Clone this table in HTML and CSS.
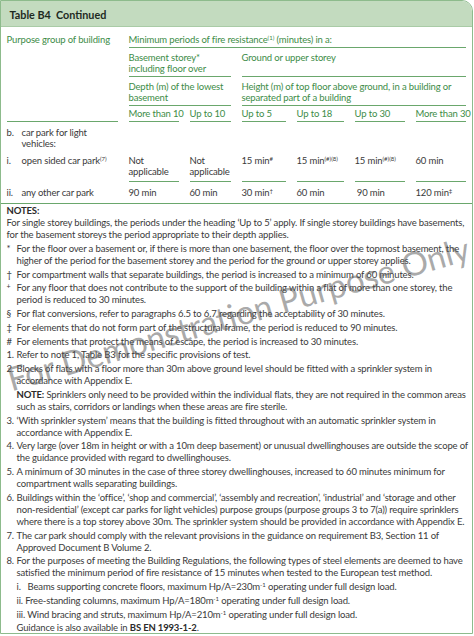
FILE: index.html
```html
<!DOCTYPE html>
<html>
<head>
<meta charset="utf-8">
<link rel="stylesheet" href="styles.css">
</head>
<body>
<div class="panel">
  <div class="title">Table B4&nbsp; Continued</div>
  <div class="tbl">
    <div class="c h purpose">Purpose group of building</div>
    <div class="c h span-all rA">Minimum periods of fire resistance<sup>(1)</sup> (minutes) in a:</div>
    <div class="c h span-base rB">Basement storey*<br>including floor over</div>
    <div class="c h span-ground rB">Ground or upper storey</div>
    <div class="c h span-base rC">Depth (m) of the lowest<br>basement</div>
    <div class="c h span-ground rC">Height (m) of top floor above ground, in a building or<br>separated part of a building</div>
    <div class="c h rD">More than 10</div>
    <div class="c h rD">Up to 10</div>
    <div class="c h rD">Up to 5</div>
    <div class="c h rD">Up to 18</div>
    <div class="c h rD">Up to 30</div>
    <div class="c h rD">More than 30</div>

    <div class="c d rE lab"><span class="mk">b.</span><span>car park for light<br>vehicles:</span></div>

    <div class="c d rF lab nb"><span class="mk">i.</span><span>open sided car park<sup>(7)</sup></span></div>
    <div class="c d rF">Not<br>applicable</div>
    <div class="c d rF">Not<br>applicable</div>
    <div class="c d rF">15 min<sup>#</sup></div>
    <div class="c d rF">15 min<sup>(#)(8)</sup></div>
    <div class="c d rF">15 min<sup>(#)(8)</sup></div>
    <div class="c d rF">60 min</div>

    <div class="c d rG lab nb"><span class="mk">ii.</span><span>any other car park</span></div>
    <div class="c d rG nb">90 min</div>
    <div class="c d rG nb">60 min</div>
    <div class="c d rG nb">30 min<sup>†</sup></div>
    <div class="c d rG nb">60 min</div>
    <div class="c d rG nb">&nbsp;90 min</div>
    <div class="c d rG nb">120 min<sup>‡</sup></div>
  </div>

  <div class="notes">
    <p class="nh">NOTES:</p>
    <p class="plain">For single storey buildings, the periods under the heading ‘Up to 5’ apply. If single storey buildings have basements,<br>for the basement storeys the period appropriate to their depth applies.</p>
    <p class="hang"><span class="mk">*</span>For the floor over a basement or, if there is more than one basement, the floor over the topmost basement, the<br>higher of the period for the basement storey and the period for the ground or upper storey applies.</p>
    <p class="hang"><span class="mk">†</span>For compartment walls that separate buildings, the period is increased to a minimum of 60 minutes.</p>
    <p class="hang"><span class="mk up">+</span>For any floor that does not contribute to the support of the building within a flat of more than one storey, the<br>period is reduced to 30 minutes.</p>
    <p class="hang"><span class="mk">§</span>For flat conversions, refer to paragraphs 6.5 to 6.7 regarding the acceptability of 30 minutes.</p>
    <p class="hang"><span class="mk">‡</span>For elements that do not form part of the structural frame, the period is reduced to 90 minutes.</p>
    <p class="hang"><span class="mk">#</span>For elements that protect the means of escape, the period is increased to 30 minutes.</p>
    <p class="hang"><span class="mk">1.</span>Refer to note 1, Table B3 for the specific provisions of test.</p>
    <p class="hang"><span class="mk">2.</span>Blocks of flats with a floor more than 30m above ground level should be fitted with a sprinkler system in<br>accordance with Appendix E.</p>
    <p class="ind"><b>NOTE:</b> Sprinklers only need to be provided within the individual flats, they are not required in the common areas<br>such as stairs, corridors or landings when these areas are fire sterile.</p>
    <p class="hang"><span class="mk">3.</span>‘With sprinkler system’ means that the building is fitted throughout with an automatic sprinkler system in<br>accordance with Appendix E.</p>
    <p class="hang"><span class="mk">4.</span>Very large (over 18m in height or with a 10m deep basement) or unusual dwellinghouses are outside the scope of<br>the guidance provided with regard to dwellinghouses.</p>
    <p class="hang"><span class="mk">5.</span>A minimum of 30 minutes in the case of three storey dwellinghouses, increased to 60 minutes minimum for<br>compartment walls separating buildings.</p>
    <p class="hang"><span class="mk">6.</span>Buildings within the ‘office’, ‘shop and commercial’, ‘assembly and recreation’, ‘industrial’ and ‘storage and other<br>non-residential’ (except car parks for light vehicles) purpose groups (purpose groups 3 to 7(a)) require sprinklers<br>where there is a top storey above 30m. The sprinkler system should be provided in accordance with Appendix E.</p>
    <p class="hang"><span class="mk">7.</span>The car park should comply with the relevant provisions in the guidance on requirement B3, Section 11 of<br>Approved Document B Volume 2.</p>
    <p class="hang"><span class="mk">8.</span>For the purposes of meeting the Building Regulations, the following types of steel elements are deemed to have<br>satisfied the minimum period of fire resistance of 15 minutes when tested to the European test method.</p>
    <p class="ind">i.&nbsp;&nbsp; Beams supporting concrete floors, maximum Hp/A=230m<sup>-1</sup> operating under full design load.</p>
    <p class="ind">ii. Free-standing columns, maximum Hp/A=180m<sup>-1</sup> operating under full design load.</p>
    <p class="ind">iii. Wind bracing and struts, maximum Hp/A=210m<sup>-1</sup> operating under full design load.</p>
    <p class="ind">Guidance is also available in <b>BS EN 1993-1-2</b>.</p>
  </div>

  <div class="watermark">For Demonstration Purpose Only</div>
</div>
</body>
</html>
```

FILE: styles.css
```css
html, body {
  margin: 0;
  padding: 0;
  background: #ffffff;
}

body {
  font-family: Lato, "Open Sans", "Liberation Sans", sans-serif;
  color: #3a3a3a;
}

.panel {
  position: relative;
  box-sizing: border-box;
  width: 473px;
  height: 634px;
  border: 1.5px solid #8dbb8c;
  border-top-right-radius: 11px;
  overflow: hidden;
}

.title {
  height: 26px;
  line-height: 28px;
  background: #c3dbbf;
  border-bottom: 1px solid #a9cba6;
  padding-left: 8.5px;
  font-size: 10.8px;
  font-weight: 700;
  color: #1e2a1f;
  box-sizing: border-box;
}

.tbl {
  display: grid;
  grid-template-columns: 111px 50px 41px 44px 47px 50px 50px;
  column-gap: 11px;
  margin-top: 3px;
  padding: 0 0 0 5.5px;
  font-size: 9.5px;
  letter-spacing: -0.15px;
  line-height: 11px;
}

.c {
  border-bottom: 1px solid #6aa76c;
  padding: 4px 0 2px;
  white-space: nowrap;
}

.c.nb {
  border-bottom-color: transparent;
}

.h {
  color: #3d8c47;
}

.d {
  color: #3a3a3a;
}

.purpose {
  grid-column: 1;
  grid-row: 1 / span 4;
}

.span-all {
  grid-column: 2 / 8;
}

.span-base {
  grid-column: 2 / 4;
}

.span-ground {
  grid-column: 4 / 8;
}

.rD {
  padding: 2px 0 2px;
}

.rE {
  grid-column: 1 / -1;
  border-bottom-color: transparent;
  padding: 5px 0 2px;
}

.rF {
  padding: 3px 0 4px;
}

.rG {
  padding: 5px 0 4px;
}

.lab {
  display: flex;
}

.lab .mk {
  width: 15px;
  flex: none;
}

sup {
  font-size: 6px;
  line-height: 0;
  vertical-align: 3.5px;
  letter-spacing: 0;
}

.notes {
  border-top: 1px solid #6aa76c;
  margin: 0 -1px;
  padding: 1px 6px 0 6.5px;
  font-size: 9.5px;
  letter-spacing: -0.15px;
  line-height: 12px;
  color: #3a3a3a;
}

.notes p {
  margin: 0 0 1.75px;
  white-space: nowrap;
}

.notes p.nh {
  font-weight: 700;
  margin-bottom: 0;
  color: #2b2b2b;
}

.notes b {
  color: #2b2b2b;
}

.hang {
  padding-left: 10px;
  text-indent: -10px;
}

.hang .mk {
  display: inline-block;
  width: 10px;
  text-indent: 0;
}

.hang .mk.up {
  font-size: 7px;
  vertical-align: 2px;
  line-height: 0;
}

.ind {
  padding-left: 10px;
}

.watermark {
  position: absolute;
  left: 7px;
  top: 362px;
  font-size: 33px;
  font-weight: 400;
  font-family: Lato, "Open Sans", sans-serif;
  line-height: 33px;
  color: rgba(85, 85, 85, 0.5);
  transform: rotate(-16deg);
  transform-origin: left center;
  white-space: nowrap;
  pointer-events: none;
}
```
